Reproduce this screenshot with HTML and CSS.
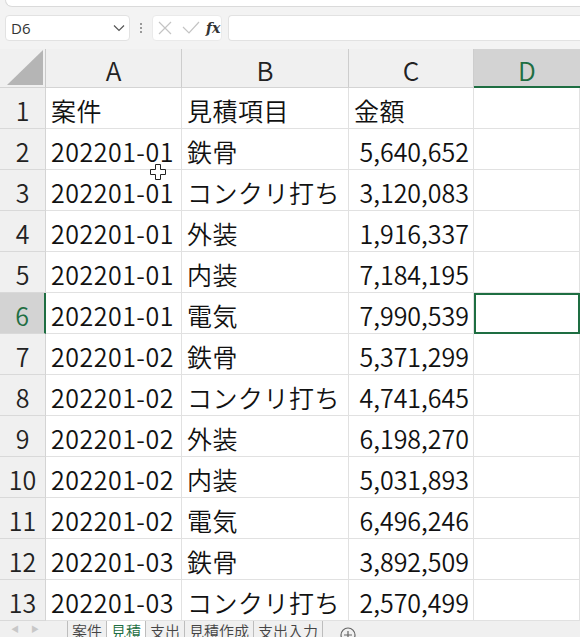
FILE: index.html
```html
<!DOCTYPE html>
<html lang="ja">
<head>
  <meta charset="UTF-8">
  <title>見積 - Excel</title>
  <link rel="stylesheet" href="styles.css">
</head>
<body>
  <div class="ribbon-edge"></div>

  <div class="formula-bar">
    <div class="name-box">
      <span>D6</span>
      <svg width="12" height="8" viewBox="0 0 12 8" fill="none" stroke="#555" stroke-width="1.2"><path d="M1 1.5l5 5 5-5"/></svg>
    </div>
    <div class="dots"><i></i><i></i><i></i></div>
    <div class="fx-box">
      <svg width="14" height="14" viewBox="0 0 14 14" stroke="#c4c4c4" stroke-width="1.2"><path d="M1 1l12 12M13 1L1 13"/></svg>
      <svg width="18" height="14" viewBox="0 0 18 14" fill="none" stroke="#c4c4c4" stroke-width="1.2"><path d="M1 6l6 6L17 1"/></svg>
      <span class="fx">fx</span>
    </div>
    <div class="formula-input"></div>
  </div>

  <div class="sheet">
    <div class="corner"><span class="tri"></span></div>
    <div class="col-head">A</div>
    <div class="col-head">B</div>
    <div class="col-head">C</div>
    <div class="col-head active">D</div>

    <div class="row-head">1</div><div class="cell">案件</div><div class="cell">見積項目</div><div class="cell">金額</div><div class="cell"></div>
    <div class="row-head">2</div><div class="cell">202201-01</div><div class="cell">鉄骨</div><div class="cell num">5,640,652</div><div class="cell"></div>
    <div class="row-head">3</div><div class="cell">202201-01</div><div class="cell">コンクリ打ち</div><div class="cell num">3,120,083</div><div class="cell"></div>
    <div class="row-head">4</div><div class="cell">202201-01</div><div class="cell">外装</div><div class="cell num">1,916,337</div><div class="cell"></div>
    <div class="row-head">5</div><div class="cell">202201-01</div><div class="cell">内装</div><div class="cell num">7,184,195</div><div class="cell"></div>
    <div class="row-head active">6</div><div class="cell">202201-01</div><div class="cell">電気</div><div class="cell num">7,990,539</div><div class="cell selected"></div>
    <div class="row-head">7</div><div class="cell">202201-02</div><div class="cell">鉄骨</div><div class="cell num">5,371,299</div><div class="cell"></div>
    <div class="row-head">8</div><div class="cell">202201-02</div><div class="cell">コンクリ打ち</div><div class="cell num">4,741,645</div><div class="cell"></div>
    <div class="row-head">9</div><div class="cell">202201-02</div><div class="cell">外装</div><div class="cell num">6,198,270</div><div class="cell"></div>
    <div class="row-head">10</div><div class="cell">202201-02</div><div class="cell">内装</div><div class="cell num">5,031,893</div><div class="cell"></div>
    <div class="row-head">11</div><div class="cell">202201-02</div><div class="cell">電気</div><div class="cell num">6,496,246</div><div class="cell"></div>
    <div class="row-head">12</div><div class="cell">202201-03</div><div class="cell">鉄骨</div><div class="cell num">3,892,509</div><div class="cell"></div>
    <div class="row-head">13</div><div class="cell">202201-03</div><div class="cell">コンクリ打ち</div><div class="cell num">2,570,499</div><div class="cell"></div>

    <svg class="cursor" width="16" height="16" viewBox="0 0 16 16"><path d="M5.5 0.5h5v5h5v5h-5v5h-5v-5h-5v-5h5z" fill="#fff" stroke="#222" stroke-width="1"/></svg>
  </div>

  <div class="tabs">
    <span class="nav">&#9664;</span>
    <span class="nav">&#9654;</span>
    <span class="tab">案件</span>
    <span class="tab current">見積</span>
    <span class="tab">支出</span>
    <span class="tab">見積作成</span>
    <span class="tab">支出入力</span>
    <span class="add">
      <svg width="16" height="16" viewBox="0 0 16 16" fill="none" stroke="#666" stroke-width="1.2"><circle cx="8" cy="8" r="7"/><path d="M8 4v8M4 8h8"/></svg>
    </span>
  </div>
</body>
</html>
```

FILE: styles.css
```css
* {
  box-sizing: border-box;
  margin: 0;
  padding: 0;
}

body {
  width: 580px;
  height: 637px;
  overflow: hidden;
  background: #f3f3f3;
  font-family: 'Noto Sans CJK JP', sans-serif;
  font-weight: 350;
  color: #111;
}

.ribbon-edge {
  height: 7px;
  margin-left: 5px;
  background: #fff;
  border: 1px solid #dadada;
  border-top: none;
  border-right: none;
  border-radius: 0 0 0 8px;
}

.formula-bar {
  display: flex;
  align-items: center;
  height: 26px;
  margin: 8px 0 8px 5px;
}

.name-box {
  display: flex;
  align-items: center;
  justify-content: space-between;
  width: 125px;
  height: 26px;
  padding: 0 4px 0 5px;
  background: #fff;
  border: 1px solid #e2e2e2;
  border-radius: 4px;
  font-family: 'Open Sans', sans-serif;
  font-weight: 400;
  font-size: 15px;
  color: #333;
}

.dots {
  display: flex;
  flex-direction: column;
  gap: 2px;
  width: 22px;
  align-items: center;
}

.dots i {
  display: block;
  width: 2px;
  height: 2px;
  background: #999;
}

.fx-box {
  display: flex;
  align-items: center;
  gap: 10px;
  width: 70px;
  height: 26px;
  padding-left: 5px;
  background: #fff;
  border: 1px solid #eaeaea;
  border-radius: 4px;
}

.fx {
  font-family: 'DejaVu Serif', serif;
  font-style: italic;
  font-weight: bold;
  font-size: 14px;
  color: #333;
  margin-left: -4px;
}

.formula-input {
  flex: 1;
  height: 26px;
  margin-left: 6px;
  background: #fff;
  border: 1px solid #e2e2e2;
  border-right: none;
  border-radius: 4px 0 0 4px;
}

.sheet {
  position: relative;
  display: grid;
  grid-template-columns: 46px 136px 167px 125px 106px;
  grid-template-rows: 39px repeat(13, 41px);
  background: #fff;
}

.corner {
  position: relative;
  background: #f0f0f0;
  border-right: 1px solid #c9c9c9;
  border-bottom: 1px solid #d4d4d4;
}

.tri {
  position: absolute;
  right: 2px;
  bottom: 2px;
  width: 36px;
  height: 35px;
  background: #b5b5b5;
  clip-path: polygon(100% 0, 100% 100%, 0 100%);
}

.col-head {
  display: flex;
  align-items: center;
  justify-content: center;
  padding-top: 3px;
  background: #f0f0f0;
  border-right: 1px solid #cdcdcd;
  border-bottom: 1px solid #d4d4d4;
  font-size: 26px;
  color: #222;
}

.col-head.active {
  background: #d3d3d3;
  color: #1e6e42;
  border-bottom: 2px solid #1e6e42;
  border-right: none;
}

.row-head {
  display: flex;
  align-items: center;
  justify-content: center;
  padding-top: 3px;
  background: #f0f0f0;
  border-right: 1px solid #d4d4d4;
  border-bottom: 1px solid #d9d9d9;
  font-size: 25px;
  color: #222;
}

.row-head.active {
  background: #d3d3d3;
  color: #1e6e42;
  border-right: 2px solid #1e6e42;
}

.cell {
  display: flex;
  align-items: center;
  padding: 3px 3px 0 5px;
  border-right: 1px solid #e1e1e1;
  border-bottom: 1px solid #e1e1e1;
  font-size: 25px;
  letter-spacing: 0.5px;
  white-space: nowrap;
  overflow: hidden;
}

.cell.num {
  justify-content: flex-end;
  letter-spacing: 0;
  padding-right: 4px;
}

.cell.selected {
  outline: 2px solid #1e6e42;
  outline-offset: -2px;
}

.cursor {
  position: absolute;
  left: 150px;
  top: 115px;
}

.tabs {
  display: flex;
  align-items: flex-start;
  height: 16px;
  background: #f0f0f0;
  font-size: 15px;
  color: #444;
}

.nav {
  width: 20px;
  line-height: 16px;
  text-align: center;
  font-size: 8px;
  color: #c8c8c8;
}

.nav:first-child {
  margin-left: 5px;
}

.nav + .tab {
  margin-left: 22px;
}

.tab {
  padding: 2px 4px 0;
  height: 16px;
  line-height: 15px;
  border-left: 1px solid #bdbdbd;
}

.tab.current {
  background: #fff;
  color: #1e6e42;
}

.tab:nth-last-child(2) {
  border-right: 1px solid #bdbdbd;
}

.add {
  margin-left: 17px;
  height: 16px;
  padding-top: 5px;
}
```
